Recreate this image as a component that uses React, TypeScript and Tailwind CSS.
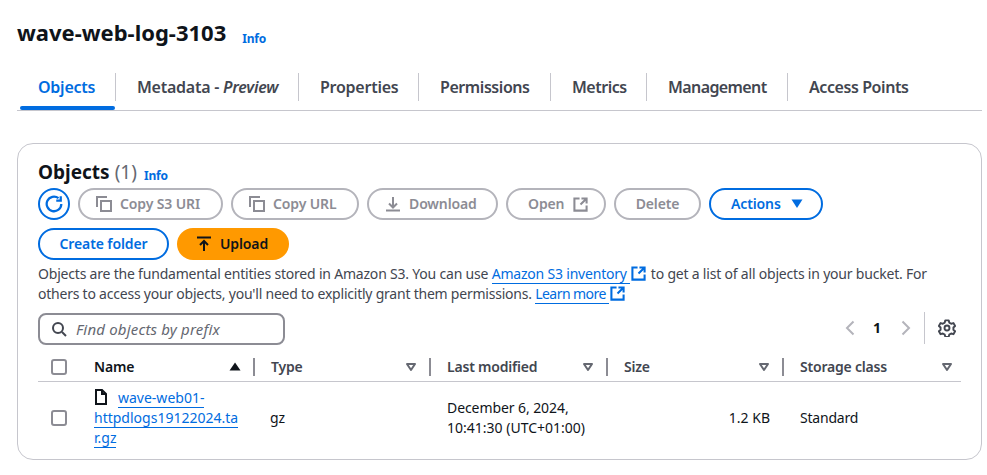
import React from "react";

const font = { fontFamily: '"Noto Sans", sans-serif' };

function Tab({ children, active, last, first, className = "" }: { children: React.ReactNode; active?: boolean; last?: boolean; first?: boolean; className?: string }) {
  return (
    <div className={`relative h-[39px] shrink-0 pt-[2px] ${className}`}>
      <div className={`flex h-[28px] items-center whitespace-nowrap ${first ? "pl-[20px]" : "pl-[21px]"} text-[16px] font-semibold leading-[20px] ${active ? "text-[#006ce0]" : "text-[#424650]"} ${last ? "" : "border-r border-[#c6c6cd]"}`}>
        {children}
      </div>
      {active && <div className="absolute bottom-0 left-[2px] right-[1px] h-[4px] rounded-[2px] bg-[#006ce0]" />}
    </div>
  );
}

function Ext({ color, className = "" }: { color: string; className?: string }) {
  return (
    <svg width="15" height="15" viewBox="0 0 16 16" fill="none" stroke={color} strokeWidth="2.2" className={`inline-block ${className}`}>
      <path d="M14.5 9v5.5h-13v-13H7" />
      <path d="M9 1.5h5.5V7M14.5 1.5L8 8" />
    </svg>
  );
}

function CopyIcon() {
  return (
    <svg width="16" height="16" viewBox="0 0 16 16" fill="none" stroke="#8c8c94" strokeWidth="2">
      <path d="M1 11V1h10" />
      <rect x="5" y="5" width="10" height="10" />
    </svg>
  );
}

function Btn({ children, primary, className = "" }: { children: React.ReactNode; primary?: boolean; className?: string }) {
  return (
    <div className={`flex h-[32px] shrink-0 items-center rounded-full border-2 text-[14px] font-semibold leading-[20px] tracking-[-0.12px] ${primary ? "border-[#006ce0] text-[#006ce0]" : "border-[#b4b4bb] text-[#8c8c94]"} ${className}`}>
      {children}
    </div>
  );
}

function Caret({ color = "#656871" }: { color?: string }) {
  return (
    <svg width="12" height="10" viewBox="0 0 12 10" fill="none" stroke={color} strokeWidth="2">
      <path d="M2 2h8L6 8z" strokeLinejoin="round" />
    </svg>
  );
}

function Head({ label, width, up, last, dark }: { label: string; width: string; up?: boolean; last?: boolean; dark?: boolean }) {
  return (
    <div className={`flex h-[18px] shrink-0 items-center justify-between pl-[16px] ${width} ${last ? "pr-[8px]" : "border-r-2 border-[#8c8c94] pr-[12px]"}`}>
      <span className={`text-[14px] font-semibold leading-[18px] tracking-[-0.2px] ${dark ? "text-[#0f141a]" : "text-[#424650]"}`}>{label}</span>
      {up ? (
        <svg width="12" height="10" viewBox="0 0 12 10"><path d="M6 0.5L11.5 8.5H0.5z" fill="#0f141a" /></svg>
      ) : (
        <Caret />
      )}
    </div>
  );
}

function Check() {
  return <div className="h-[16px] w-[16px] rounded-[3px] border-2 border-[#8c8c94] bg-white" />;
}

export default function App() {
  return (
    <div className="h-[475px] w-[987px] overflow-hidden bg-white pl-[17px] pr-[5px] pt-[17px]" style={font}>
      <div className="flex h-[30px] items-center">
        <h1 className="-mt-[1px] text-[22px] font-bold leading-[30px] text-[#0f141a]">wave-web-log-3103</h1>
        <a className="ml-[16px] mt-[14px] text-[12px] font-bold leading-[14px] tracking-[-0.2px] text-[#006ce0]">Info</a>
      </div>

      <div className="mt-[24px] flex h-[40px] border-b border-[#c6c6cd] pl-[1px]">
        <Tab active first className="w-[98px] tracking-[-0.25px]">Objects</Tab>
        <Tab className="w-[183px] tracking-[-0.25px]">
          Metadata -&nbsp;<i>Preview</i>
        </Tab>
        <Tab className="w-[120px] tracking-[-0.25px]">Properties</Tab>
        <Tab className="w-[132px] tracking-[-0.43px]">Permissions</Tab>
        <Tab className="w-[96px] tracking-[-0.5px]">Metrics</Tab>
        <Tab className="w-[141px] tracking-[-0.6px]">Management</Tab>
        <Tab last className="w-[150px] tracking-[-0.42px]">Access Points</Tab>
      </div>

      <div className="mt-[32px] h-[317px] w-[965px] rounded-[16px] border border-[#c6c6cd] pl-[20px] pr-[20px] pt-[14px]">
        <div className="flex h-[28px] items-center">
          <span className="text-[19px] font-bold leading-[28px] text-[#0f141a]">Objects</span>
          <span className="ml-[5px] text-[19px] leading-[28px] text-[#656871]">(1)</span>
          <a className="ml-[7px] mt-[7px] text-[12px] font-bold leading-[14px] tracking-[-0.2px] text-[#006ce0]">Info</a>
        </div>

        <div className="mt-[2px] flex items-center gap-[8px]">
          <div className="flex h-[32px] w-[32px] shrink-0 items-center justify-center rounded-full border-2 border-[#006ce0]">
            <svg width="18" height="18" viewBox="0 0 16 16" fill="none" stroke="#006ce0" strokeWidth="2">
              <path d="M14.5 8A6.5 6.5 0 1 1 12 2.8" />
              <path d="M14 1V5H10" />
            </svg>
          </div>
          <Btn className="w-[145px] gap-[8px] pl-[16px]"><CopyIcon />Copy S3 URI</Btn>
          <Btn className="w-[128px] gap-[8px] pl-[16px]"><CopyIcon />Copy URL</Btn>
          <Btn className="w-[131px] gap-[8px] pl-[16px]">
            <svg width="16" height="16" viewBox="0 0 16 16" fill="none" stroke="#8c8c94" strokeWidth="2"><path d="M1 14.5h14M8 1v10M4 7.5l4 4 4-4" /></svg>
            Download
          </Btn>
          <Btn className="w-[100px] gap-[9px] pl-[20px]">Open<Ext color="#8c8c94" /></Btn>
          <Btn className="w-[87px] justify-center">Delete</Btn>
          <Btn primary className="w-[114px] gap-[10px] pl-[20px]">
            Actions
            <svg width="12" height="10" viewBox="0 0 12 10"><path d="M0.5 0.5H11.5L6 9z" fill="#006ce0" /></svg>
          </Btn>
        </div>

        <div className="mt-[8px] flex items-center gap-[8px]">
          <Btn primary className="w-[131px] justify-center">Create folder</Btn>
          <div className="flex h-[32px] w-[112px] items-center gap-[8px] rounded-full bg-[#ff9900] pl-[19px] text-[14px] font-semibold leading-[20px] tracking-[-0.12px] text-[#0f141a]">
            <svg width="16" height="16" viewBox="0 0 16 16" fill="none" stroke="#0f141a" strokeWidth="2"><path d="M1 1.5h14M8 15V5M4 9l4-4 4 4" /></svg>
            Upload
          </div>
        </div>

        <p className="mt-[4px] whitespace-nowrap text-[14px] leading-[20px] tracking-[-0.2px] text-[#424650]">
          Objects are the fundamental entities stored in Amazon S3. You can use{" "}
          <a className="border-b border-[#006ce0] pr-[3px] text-[#006ce0]">Amazon S3 inventory</a>
          <Ext color="#006ce0" className="ml-[1px] mr-[5px] align-[-2px]" />
          to get a list of all objects in your bucket. For
          <br />
          <span className="tracking-[-0.225px]">others to access your objects, you'll need to explicitly grant them permissions.</span>{" "}
          <a className="border-b border-[#006ce0] pr-[3px] tracking-[-0.55px] text-[#006ce0]">Learn more</a>
          <Ext color="#006ce0" className="ml-[1px] align-[-2px]" />
        </p>

        <div className="mt-[9px] flex h-[32px] items-center">
          <div className="flex h-[32px] w-[247px] items-center rounded-[8px] border-2 border-[#8c8c94] pl-[11px]">
            <svg width="16" height="16" viewBox="0 0 16 16" fill="none" stroke="#424650" strokeWidth="2"><circle cx="7" cy="7" r="5" /><path d="M11 11l4 4" /></svg>
            <span className="-mt-[1px] ml-[9px] text-[15px] italic leading-[18px] tracking-[0.18px] text-[#656871]">Find objects by prefix</span>
          </div>
          <div className="ml-auto flex -translate-y-[1px] items-center">
            <svg width="10" height="16" viewBox="0 0 10 16" fill="none" stroke="#b4b4bb" strokeWidth="2"><path d="M8.5 1.5L2 8l6.5 6.5" /></svg>
            <span className="ml-[18px] text-[14px] font-bold leading-[18px] text-[#0f141a]">1</span>
            <svg width="10" height="16" viewBox="0 0 10 16" fill="none" stroke="#b4b4bb" strokeWidth="2" className="ml-[20px]"><path d="M1.5 1.5L8 8l-6.5 6.5" /></svg>
            <div className="ml-[13px] h-[32px] w-px bg-[#c6c6cd]" />
            <svg width="18" height="18" viewBox="0 0 16 16" fill="none" stroke="#424650" strokeWidth="1.7" className="ml-[13px] mr-[5px]">
              <circle cx="8" cy="8" r="2.2" />
              <path d="M6.5 1.2h3l.5 2 1.7 1 2-.6 1.5 2.6-1.5 1.4v1.9l1.5 1.4-1.5 2.6-2-.6-1.7 1-.5 2h-3l-.5-2-1.7-1-2 .6L.8 10.9l1.5-1.4V7.6L.8 6.2l1.5-2.6 2 .6 1.7-1z" strokeLinejoin="round" />
            </svg>
          </div>
        </div>

        <div className="mt-[7px] flex h-[30px] w-[923px] items-start border-b border-[#c6c6cd] pt-[6px]">
          <div className="flex h-[18px] w-[40px] shrink-0 items-center pl-[13px]"><Check /></div>
          <div className="flex h-[18px] w-[0px] shrink-0 items-center"><div className="h-[18px] w-[2px] -translate-x-[2px] bg-[#c6c6cd]" /></div>
          <Head label="Name" width="w-[177px]" up dark />
          <Head label="Type" width="w-[176px]" />
          <Head label="Last modified" width="w-[177px]" />
          <Head label="Size" width="w-[176px]" />
          <Head label="Storage class" width="w-[177px]" last />
        </div>

        <div className="flex h-[72px] w-[923px] items-center text-[14px] leading-[20px] text-[#0f141a]">
          <div className="flex w-[40px] shrink-0 items-center pl-[13px]"><Check /></div>
          <div className="w-[177px] shrink-0 pl-[16px] text-[#006ce0]">
            <svg width="14" height="16" viewBox="0 0 14 16" fill="none" stroke="#0f141a" strokeWidth="2" className="mb-[3px] mr-[10px] inline-block">
              <path d="M2 1h6l4 4v10H2z" /><path d="M8 1v4h4" />
            </svg>
            <a className="border-b border-[#006ce0]">wave-web01-</a>
            <br />
            <a className="border-b border-[#006ce0]">httpdlogs19122024.ta</a>
            <br />
            <a className="border-b border-[#006ce0]">r.gz</a>
          </div>
          <div className="w-[176px] shrink-0 pl-[15px]">gz</div>
          <div className="w-[177px] shrink-0 pl-[16px]">
            <span className="tracking-[-0.08px]">December 6, 2024,</span>
            <br />
            10:41:30 (UTC+01:00)
          </div>
          <div className="w-[176px] shrink-0 pr-[14px] text-right">1.2 KB</div>
          <div className="pl-[16px] tracking-[-0.2px]">Standard</div>
        </div>
      </div>
    </div>
  );
}
